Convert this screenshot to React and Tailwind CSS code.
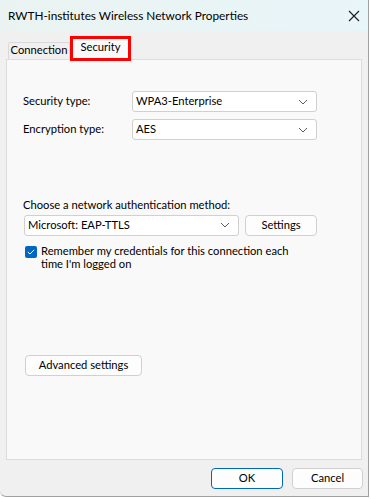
import React from "react";

const font = { fontFamily: 'Lato, "Noto Sans", "Liberation Sans", sans-serif' };

function Chevron() {
  return (
    <svg width="10" height="6" viewBox="0 0 10 6" className="shrink-0">
      <path d="M1 1 L5 5 L9 1" fill="none" stroke="#5f5f5f" strokeWidth="1" />
    </svg>
  );
}

function Select({ value, className }) {
  return (
    <div className={`flex h-[21px] shrink-0 items-center justify-between rounded-[3px] border border-[#d0d0d0] bg-white pl-[3px] pr-[8px] text-[11.2px] text-black ${className}`}>
      <span>{value}</span>
      <Chevron />
    </div>
  );
}

function Button({ children, className, primary }) {
  return (
    <div className={`flex shrink-0 items-center justify-center rounded-[4px] border bg-[#fdfdfd] text-[11.2px] text-black ${primary ? "border-[#0067c0]" : "border-[#d0d0d0]"} ${className}`}>
      {children}
    </div>
  );
}

export default function App() {
  return (
    <div style={font} className="relative h-[499px] w-[371px] overflow-hidden bg-white">
      <div className="flex h-[497px] w-[369px] flex-col rounded-bl-[6px] border-r border-b border-[#a0a0a0] bg-[#f0f0f0]">
        {/* Title bar */}
        <div className="flex h-[31px] items-center justify-between bg-gradient-to-r from-[#eaf3f1] to-[#e8f5f9] pl-[8px] pr-[6px]">
          <span className="text-[11.8px] text-black">RWTH-institutes Wireless Network Properties</span>
          <svg width="12" height="12" viewBox="0 0 12 12" className="mr-[2px]">
            <path d="M1 1 L11 11 M11 1 L1 11" stroke="#1a1a1a" strokeWidth="1.1" />
          </svg>
        </div>
        {/* Tabs */}
        <div className="flex h-[28px] items-end pl-[8px]">
          <div className="flex h-[17px] w-[62px] items-center justify-center whitespace-nowrap rounded-t-[2px] border border-b-0 border-[#d9d9d9] bg-[#f0f0f0] pb-[1px] text-[11.2px] text-black">
            Connection
          </div>
          <div className="relative z-10 -mb-[2px] flex h-[25px] w-[61px] items-center justify-center border-[3px] border-[#ff0000] bg-[#f9f9f9] pb-[2px] text-[11.2px] text-black">
            Security
          </div>
        </div>
        {/* Panel */}
        <div className="mx-[6px] flex h-[401px] flex-col border border-[#dcdcdc] bg-[#f9f9f9] pl-[16px] pr-[30px]">
          <div className="mt-[31px] flex items-center">
            <span className="w-[109px] shrink-0 text-[11.2px] text-black">Security type:</span>
            <Select value="WPA3-Enterprise" className="w-[185px]" />
          </div>
          <div className="mt-[7px] flex items-center">
            <span className="w-[109px] shrink-0 text-[11.2px] text-black">Encryption type:</span>
            <Select value="AES" className="w-[185px]" />
          </div>
          <div className="mt-[57px] text-[11.2px] text-black">Choose a network authentication method:</div>
          <div className="mt-[1px] flex items-center">
            <Select value="Microsoft: EAP-TTLS" className="ml-[1px] w-[215px]" />
            <Button className="ml-[6px] h-[21px] w-[72px]">Settings</Button>
          </div>
          <div className="mt-[8px] flex items-start">
            <div className="ml-[2px] mt-[2px] flex h-[12px] w-[12px] shrink-0 items-center justify-center rounded-[2px] bg-[#0067c0]">
              <svg width="8" height="6" viewBox="0 0 8 6">
                <path d="M0.8 3 L3 5 L7.2 0.8" fill="none" stroke="white" strokeWidth="1" />
              </svg>
            </div>
            <div className="ml-[4px] whitespace-nowrap text-[11.2px] leading-[13px] text-black">
              Remember my credentials for this connection each
              <br />
              time I'm logged on
            </div>
          </div>
          <Button className="ml-[2px] mt-[85px] h-[21px] w-[117px]">Advanced settings</Button>
        </div>
        {/* Bottom buttons */}
        <div className="mt-[8px] flex justify-end pr-[5px]">
          <Button primary className="h-[21px] w-[72px]">OK</Button>
          <Button className="ml-[9px] h-[21px] w-[71px]">Cancel</Button>
        </div>
      </div>
    </div>
  );
}
